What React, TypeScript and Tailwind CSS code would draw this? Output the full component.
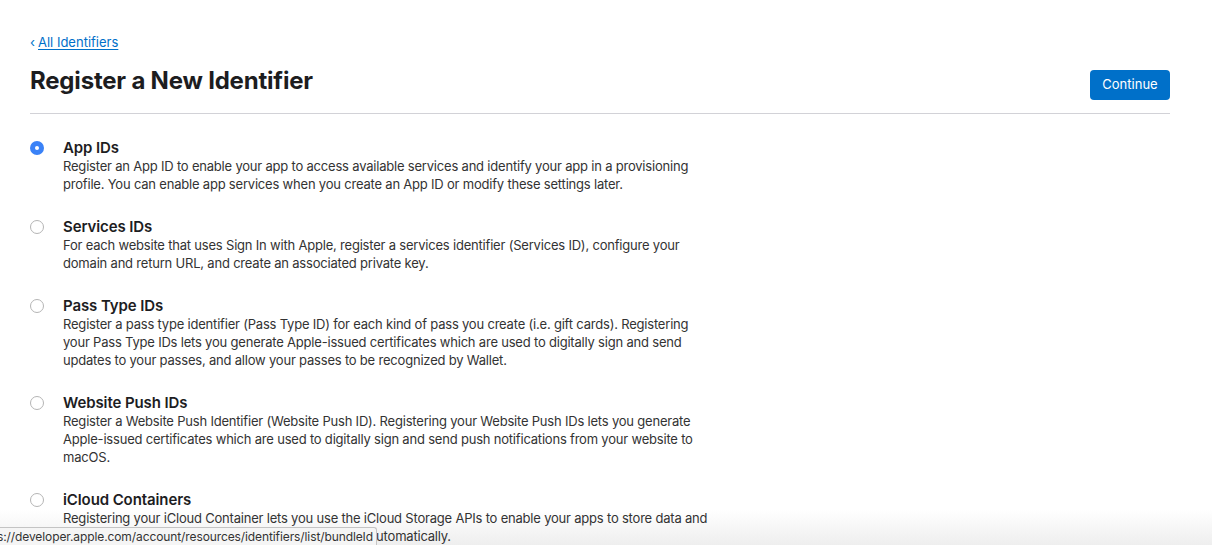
const items = [
  {
    title: "App IDs",
    selected: true,
    text: "Register an App ID to enable your app to access available services and identify your app in a provisioning profile. You can enable app services when you create an App ID or modify these settings later.",
  },
  {
    title: "Services IDs",
    text: "For each website that uses Sign In with Apple, register a services identifier (Services ID), configure your domain and return URL, and create an associated private key.",
  },
  {
    title: "Pass Type IDs",
    text: "Register a pass type identifier (Pass Type ID) for each kind of pass you create (i.e. gift cards). Registering your Pass Type IDs lets you generate Apple-issued certificates which are used to digitally sign and send updates to your passes, and allow your passes to be recognized by Wallet.",
  },
  {
    title: "Website Push IDs",
    text: "Register a Website Push Identifier (Website Push ID). Registering your Website Push IDs lets you generate Apple-issued certificates which are used to digitally sign and send push notifications from your website to macOS.",
  },
  {
    title: "iCloud Containers",
    text: "Registering your iCloud Container lets you use the iCloud Storage APIs to enable your apps to store data and documents in iCloud, keeping your apps up to date automatically.",
  },
];

const Radio = ({ selected }: { selected?: boolean }) =>
  selected ? (
    <div className="mt-[2px] flex h-[14px] w-[14px] shrink-0 items-center justify-center rounded-full bg-[#3a82f7]">
      <div className="h-[4px] w-[4px] rounded-full bg-white" />
    </div>
  ) : (
    <div className="mt-[2px] h-[14px] w-[14px] shrink-0 rounded-full border border-[#b5b5b5] bg-white" />
  );

export default function App() {
  return (
    <div className="relative h-[545px] overflow-hidden bg-[linear-gradient(to_bottom,#ffffff_510px,#eeeeee_545px)] font-['Inter',sans-serif] text-[#1d1d1f] antialiased">
      <div className="pl-[30px] pr-[42px] pt-[33px]">
        <a href="#" className="flex h-[18px] items-center text-[13px] leading-[18px] text-[#0070c9]">
          <span className="mr-[3px]">‹</span>
          <span className="underline underline-offset-2">All Identifiers</span>
        </a>

        <div className="mt-[15px] flex items-start justify-between border-b border-[#d2d2d7] pb-[13px]">
          <h1 className="text-[24px] font-bold leading-[30px] tracking-[-0.2px]">
            Register a New Identifier
          </h1>
          <button className="mt-[4px] h-[30px] w-[80px] rounded-[4px] bg-[#0070c9] text-[13px] text-white">
            Continue
          </button>
        </div>

        <div className="mt-[25px] flex flex-col gap-[25px]">
          {items.map((item) => (
            <div key={item.title} className="flex gap-[19px]">
              <Radio selected={item.selected} />
              <div className="w-[655px]">
                <div className="text-[15px] font-semibold leading-[18px] tracking-[-0.1px]">{item.title}</div>
                <p className="text-[13px] leading-[18px] tracking-[-0.2px] text-[#333333]">{item.text}</p>
              </div>
            </div>
          ))}
        </div>
      </div>

      {/* browser status bar */}
      <div className="absolute bottom-0 left-0 flex h-[18px] w-[377px] justify-end overflow-hidden rounded-tr-[3px] border-r border-t border-[#c4c4c4] bg-[#f5f5f5] pr-[3px] text-[12px] leading-[17px] tracking-[-0.1px] text-[#333333]">
        <span className="whitespace-nowrap">https://developer.apple.com/account/resources/identifiers/list/bundleId</span>
      </div>
    </div>
  );
}
